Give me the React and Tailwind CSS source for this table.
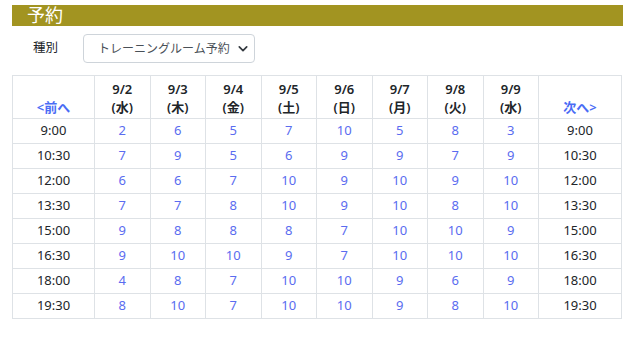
const days = [
  { d: '9/2', w: '水' },
  { d: '9/3', w: '木' },
  { d: '9/4', w: '金' },
  { d: '9/5', w: '土' },
  { d: '9/6', w: '日' },
  { d: '9/7', w: '月' },
  { d: '9/8', w: '火' },
  { d: '9/9', w: '水' },
];

const rows = [
  { t: '9:00', v: [2, 6, 5, 7, 10, 5, 8, 3] },
  { t: '10:30', v: [7, 9, 5, 6, 9, 9, 7, 9] },
  { t: '12:00', v: [6, 6, 7, 10, 9, 10, 9, 10] },
  { t: '13:30', v: [7, 7, 8, 10, 9, 10, 8, 10] },
  { t: '15:00', v: [9, 8, 8, 8, 7, 10, 10, 9] },
  { t: '16:30', v: [9, 10, 10, 9, 7, 10, 10, 10] },
  { t: '18:00', v: [4, 8, 7, 10, 10, 9, 6, 9] },
  { t: '19:30', v: [8, 10, 7, 10, 10, 9, 8, 10] },
];

function App() {
  return (
    <div className="min-h-screen bg-white pl-3 pt-[5px] font-['Noto_Sans','Noto_Sans_CJK_JP',sans-serif] text-[#212529]">
      <h2 className="w-[611px] h-[21px] bg-[#a29421] pl-[15px] text-white text-[18px] leading-[21px]">
        予約
      </h2>

      <div className="flex items-center mt-2 h-[29px]">
        <label className="w-[71px] pl-[21px] text-[12.5px]">種別</label>
        <div className="relative w-[172px] h-[29px] border border-[#ced4da] rounded-[4px] flex items-center pl-[14px] text-[12px] text-[#495057]">
          トレーニングルーム予約
          <svg className="absolute right-[6px] top-[10px]" width="10" height="8" viewBox="0 0 16 13">
            <path d="M2 3l6 6 6-6" fill="none" stroke="#343a40" strokeWidth="2.8" strokeLinecap="round" strokeLinejoin="round" />
          </svg>
        </div>
      </div>

      <table className="mt-[12px] w-[609px] table-fixed border-collapse text-[13px]">
        <colgroup>
          <col className="w-[82px]" />
          {days.map((_, i) => (
            <col key={i} className="w-[55.5px]" />
          ))}
          <col className="w-[83px]" />
        </colgroup>
        <thead>
          <tr className="h-[43px]">
            <th className="border border-[#dee2e6] align-bottom pb-[2px] leading-[18px] font-semibold text-[#4a6cf5]">
              &lt;前へ
            </th>
            {days.map((x, i) => (
              <th key={i} className="border border-[#dee2e6] align-bottom pb-[2px] leading-[18px] font-semibold">
                {x.d}
                <br />({x.w})
              </th>
            ))}
            <th className="border border-[#dee2e6] align-bottom pb-[2px] leading-[18px] font-semibold text-[#4a6cf5]">
              次へ&gt;
            </th>
          </tr>
        </thead>
        <tbody>
          {rows.map((r) => (
            <tr key={r.t} className="h-[25px]">
              <td className="border border-[#dee2e6] text-center">{r.t}</td>
              {r.v.map((n, i) => (
                <td key={i} className="border border-[#dee2e6] text-center text-[#5a6cf0]">
                  {n}
                </td>
              ))}
              <td className="border border-[#dee2e6] text-center">{r.t}</td>
            </tr>
          ))}
        </tbody>
      </table>
    </div>
  );
}

export default App;
